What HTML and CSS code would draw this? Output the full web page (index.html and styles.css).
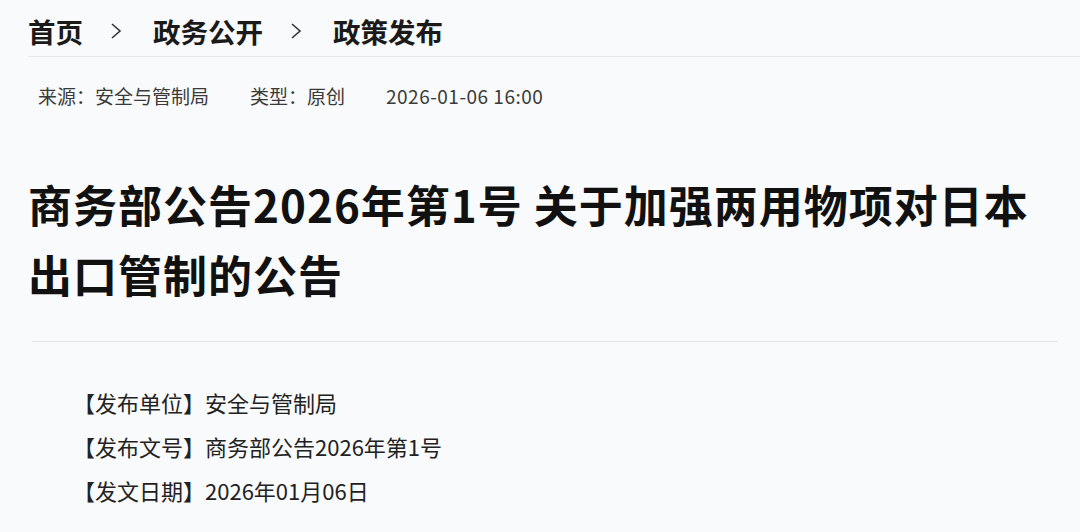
FILE: index.html
```html
<!DOCTYPE html>
<html lang="zh-CN">
<head>
    <meta charset="UTF-8">
    <meta name="viewport" content="width=device-width, initial-scale=1.0">
    <title>商务部公告2026年第1号</title>
    <link rel="stylesheet" href="styles.css">
</head>
<body>
    <div class="page">
        <nav class="crumbs">
            <a href="#">首页</a>
            <svg class="chevron" viewBox="0 0 12 20" width="12" height="20"><polyline points="2,3 10,10 2,17" fill="none" stroke="#333" stroke-width="1.6"/></svg>
            <a href="#">政务公开</a>
            <svg class="chevron" viewBox="0 0 12 20" width="12" height="20"><polyline points="2,3 10,10 2,17" fill="none" stroke="#333" stroke-width="1.6"/></svg>
            <a href="#">政策发布</a>
        </nav>

        <div class="meta">
            <span>来源：安全与管制局</span>
            <span>类型：原创</span>
            <span>2026-01-06 16:00</span>
        </div>

        <h1 class="title">商务部公告2026年第1号 关于加强两用物项对日本出口管制的公告</h1>

        <div class="info">
            <p>【发布单位】安全与管制局</p>
            <p>【发布文号】商务部公告2026年第1号</p>
            <p>【发文日期】2026年01月06日</p>
        </div>
    </div>
</body>
</html>
```

FILE: styles.css
```css
body {
    margin: 0;
    background-color: #f9fafb;
    color: #1a1a1a;
    font-family: "Noto Sans CJK SC", "Noto Sans", sans-serif;
}

.page {
    padding-left: 28px;
}

.crumbs {
    display: flex;
    align-items: center;
    padding-top: 11px;
    padding-bottom: 5px;
    border-bottom: 1px solid #e6e7e9;
    line-height: 40px;
}

.crumbs a {
    color: #1a1a1a;
    font-size: 27.5px;
    font-weight: bold;
    text-decoration: none;
}

.chevron {
    margin: 0 31px 0 27px;
}

.meta {
    display: flex;
    gap: 41px;
    padding: 27px 0 0 10px;
    font-size: 19px;
    line-height: 24px;
    color: #3a3a3a;
}

.meta span:last-child {
    letter-spacing: 0.5px;
}

.title {
    margin: 61px 0 0 0;
    max-width: 1030px;
    font-size: 44px;
    line-height: 70px;
    font-weight: bold;
    letter-spacing: 1px;
    color: #111;
}

.info {
    margin: 32px 23px 0 4px;
    padding: 38px 0 0 41px;
    border-top: 1px solid #e3e4e6;
}

.info p {
    margin: 0;
    font-size: 22px;
    line-height: 44px;
    color: #222;
}
```
